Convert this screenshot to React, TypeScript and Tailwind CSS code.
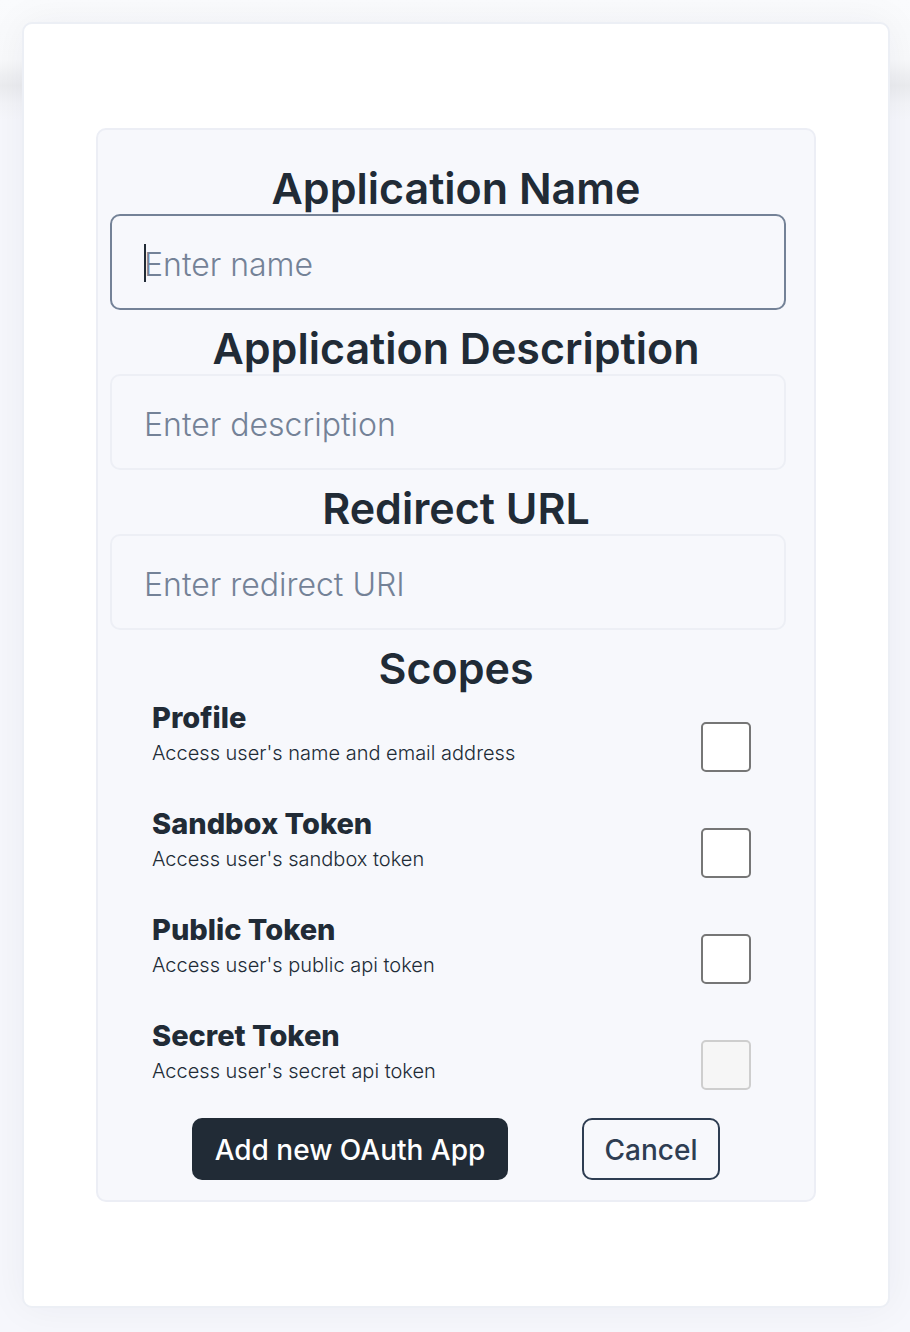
import React from "react";

const fields = [
  { id: "app-name", label: "Application Name", placeholder: "Enter name", active: true },
  { id: "app-description", label: "Application Description", placeholder: "Enter description", active: false },
  { id: "redirect-url", label: "Redirect URL", placeholder: "Enter redirect URI", active: false },
];

const scopes = [
  { id: "profile", title: "Profile", text: "Access user's name and email address", disabled: false },
  { id: "sandbox", title: "Sandbox Token", text: "Access user's sandbox token", disabled: false },
  { id: "public", title: "Public Token", text: "Access user's public api token", disabled: false },
  { id: "secret", title: "Secret Token", text: "Access user's secret api token", disabled: true },
];

type FieldProps = { id: string; label: string; placeholder: string; active: boolean };

function Field({ id, label, placeholder, active }: FieldProps) {
  return (
    <div className="mb-3">
      <label htmlFor={id} className="block text-center text-[43px] leading-[52px] font-semibold">
        {label}
      </label>
      <div className="relative mr-7 ml-3">
        <input
          id={id}
          type="text"
          placeholder={placeholder}
          className={
            "block h-24 w-full rounded-[10px] border-2 bg-[#f7f8fc] px-8 pt-1 text-[32px] font-[350] text-[#212b36] placeholder-[#748297] outline-none focus:border-[#748297] " +
            (active ? "border-[#748297]" : "border-[#edeff5]")
          }
        />
        {active && <span className="absolute top-[30px] left-[34px] h-[38px] w-0.5 bg-[#212b36]" />}
      </div>
    </div>
  );
}

export default function App() {
  return (
    <div className="min-h-screen bg-[#f6f7fc] font-['Inter','Liberation_Sans',sans-serif] text-[#212b36]">
      <header className="h-[120px] bg-[linear-gradient(to_bottom,#fafbfd_0px,#f8f9fb_60px,#eff0f3_76px,#ebecef_86px,#f3f4f8_104px,#f6f7fc_120px)]" />
      <main className="-mt-[120px] px-[22px] pt-[22px] pb-6 sm:pr-5">
        <section className="rounded-[10px] border-2 border-[#eceff5] bg-white px-[72px] py-[104px] shadow-[0_0_40px_rgba(33,43,54,0.05)]">
          <form className="rounded-[10px] border-2 border-[#eceef5] bg-[#f7f8fc] pt-8 pb-5" onSubmit={(e) => e.preventDefault()}>
            {fields.map((f) => (
              <Field key={f.id} {...f} />
            ))}
            <fieldset>
              <legend className="w-full text-center text-[43px] leading-[52px] font-semibold">Scopes</legend>
              {scopes.map((s) => (
                <div key={s.id} className="flex h-[106px] items-start justify-between pr-[63px] pl-[54px]">
                  <label htmlFor={s.id} className="pt-1.5">
                    <span className="block text-[29px] leading-9 font-extrabold">{s.title}</span>
                    <span className="block text-[20px] leading-[34px] font-light">{s.text}</span>
                  </label>
                  <input
                    id={s.id}
                    type="checkbox"
                    disabled={s.disabled}
                    className="mt-7 size-[50px] shrink-0 appearance-none rounded-[5px] border-2 border-[#767676] bg-white checked:bg-[#212b36] disabled:border-[#cecece] disabled:bg-[#f6f6f6]"
                  />
                </div>
              ))}
            </fieldset>
            <div className="flex justify-center gap-[74px]">
              <button type="submit" className="h-[62px] w-[316px] rounded-[10px] bg-[#212b36] pt-0.5 text-[28px] font-medium whitespace-nowrap text-white">
                Add new OAuth App
              </button>
              <button type="button" className="h-[62px] w-[138px] rounded-[10px] border-2 border-[#2e3d52] pt-0.5 text-[28px] font-medium whitespace-nowrap text-[#2e3d52]">
                Cancel
              </button>
            </div>
          </form>
        </section>
      </main>
    </div>
  );
}
